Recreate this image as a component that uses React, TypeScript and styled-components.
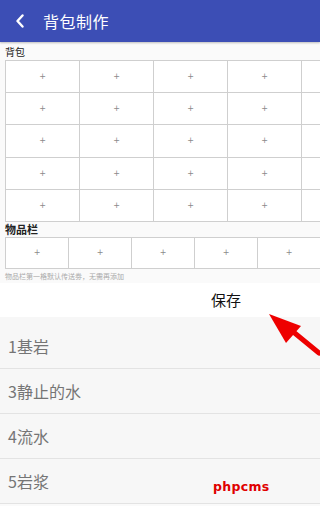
import styled, { createGlobalStyle } from "styled-components";

const GlobalStyle = createGlobalStyle`
  html, body {
    margin: 0;
    padding: 0;
    background: #fafafa;
    overflow: hidden;
  }
  body {
    font-family: "Noto Sans CJK SC", "Roboto", sans-serif;
  }
`;

const bagRows = 5;
const bagCols = 5;
const itemCols = 5;
const blocks = ["1基岩", "3静止的水", "4流水", "5岩浆"];

function App() {
  return (
    <Page>
      <GlobalStyle />
      <Header>
        <BackIcon viewBox="0 0 10 14">
          <path d="M7.5 1.5 L2.5 7 L7.5 12.5" fill="none" stroke="#fff" strokeWidth="2.4" strokeLinecap="round" strokeLinejoin="round" />
        </BackIcon>
        <Title>背包制作</Title>
      </Header>

      <SectionLabel>背包</SectionLabel>
      <Clip>
        <BagGrid>
          {Array.from({ length: bagRows * bagCols }).map((_, i) => (
            <Slot key={i}>{i % bagCols === bagCols - 1 ? "" : "+"}</Slot>
          ))}
        </BagGrid>
      </Clip>

      <SectionLabel $bold>物品栏</SectionLabel>
      <Clip>
        <ItemRow>
          {Array.from({ length: itemCols }).map((_, i) => (
            <Slot key={i}>+</Slot>
          ))}
        </ItemRow>
      </Clip>
      <Note>物品栏第一格默认传送劵，无需再添加</Note>

      <SaveBar>
        <SaveText>保存</SaveText>
      </SaveBar>

      <BlockList>
        {blocks.map((b) => (
          <BlockItem key={b}>{b}</BlockItem>
        ))}
      </BlockList>

      <Arrow viewBox="0 0 60 50">
        <line x1="22" y1="19" x2="50" y2="42" stroke="#ee0000" strokeWidth="5" strokeLinecap="round" />
        <polygon points="0,3 32,15 17,32" fill="#ee0000" />
      </Arrow>
      <Watermark>phpcms</Watermark>
    </Page>
  );
}

export default App;

const Page = styled.div`
  position: relative;
  width: 320px;
  height: 506px;
  overflow: hidden;
  background: #fafafa;
`;

const Header = styled.div`
  height: 42px;
  background: #3c4eb5;
  display: flex;
  align-items: center;
  padding-left: 15px;
  box-sizing: border-box;
  box-shadow: 0 1px 2px rgba(0, 0, 0, 0.25);
`;

const BackIcon = styled.svg`
  width: 10px;
  height: 14px;
`;

const Title = styled.span`
  margin-left: 18px;
  color: #ffffff;
  font-size: 16px;
  letter-spacing: 0.5px;
`;

const SectionLabel = styled.div<{ $bold?: boolean }>`
  height: ${(p) => (p.$bold ? "15px" : "18px")};
  line-height: ${(p) => (p.$bold ? "15px" : "20px")};
  padding-left: 5px;
  font-size: ${(p) => (p.$bold ? "11px" : "10px")};
  font-weight: ${(p) => (p.$bold ? 700 : 400)};
  color: #222;
`;

const Clip = styled.div`
  width: 320px;
  overflow: hidden;
`;

const BagGrid = styled.div`
  margin-left: 5px;
  display: grid;
  grid-template-columns: repeat(${bagCols}, 74px);
  grid-auto-rows: 32.2px;
  width: ${bagCols * 74}px;
  border-top: 1px solid #cfcfcf;
  border-left: 1px solid #cfcfcf;
`;

const ItemRow = styled.div`
  margin-left: 5px;
  display: grid;
  grid-template-columns: repeat(${itemCols}, 63px);
  grid-auto-rows: 31px;
  width: ${itemCols * 63}px;
  border-top: 1px solid #cfcfcf;
  border-left: 1px solid #cfcfcf;
`;

const Slot = styled.div`
  box-sizing: border-box;
  background: #ffffff;
  border-right: 1.5px solid #cfcfcf;
  border-bottom: 1.5px solid #cfcfcf;
  display: flex;
  align-items: center;
  justify-content: center;
  font-family: "DejaVu Sans", sans-serif;
  font-size: 8px;
  color: #8a8a8a;
`;

const Note = styled.div`
  padding: 2px 0 0 5px;
  height: 10px;
  line-height: 10px;
  font-size: 7px;
  color: #aaa;
`;

const SaveBar = styled.div`
  margin-top: 2px;
  height: 34px;
  background: #ffffff;
  display: flex;
  align-items: center;
  padding-left: 211px;
`;

const SaveText = styled.span`
  font-size: 15px;
  color: #111;
`;

const BlockList = styled.div`
  padding-top: 7px;
  background: #f7f7f7;
`;

const BlockItem = styled.div`
  height: 45px;
  display: flex;
  align-items: center;
  padding-left: 8px;
  font-size: 16px;
  color: #757575;
  border-bottom: 1px solid #e3e3e3;
  box-sizing: border-box;
`;

const Arrow = styled.svg`
  position: absolute;
  left: 269px;
  top: 311px;
  width: 60px;
  height: 50px;
`;

const Watermark = styled.div`
  position: absolute;
  left: 213px;
  top: 479px;
  font-family: "DejaVu Sans", sans-serif;
  font-weight: 700;
  font-size: 12.5px;
  color: #e00000;
  letter-spacing: 0.3px;
`;
